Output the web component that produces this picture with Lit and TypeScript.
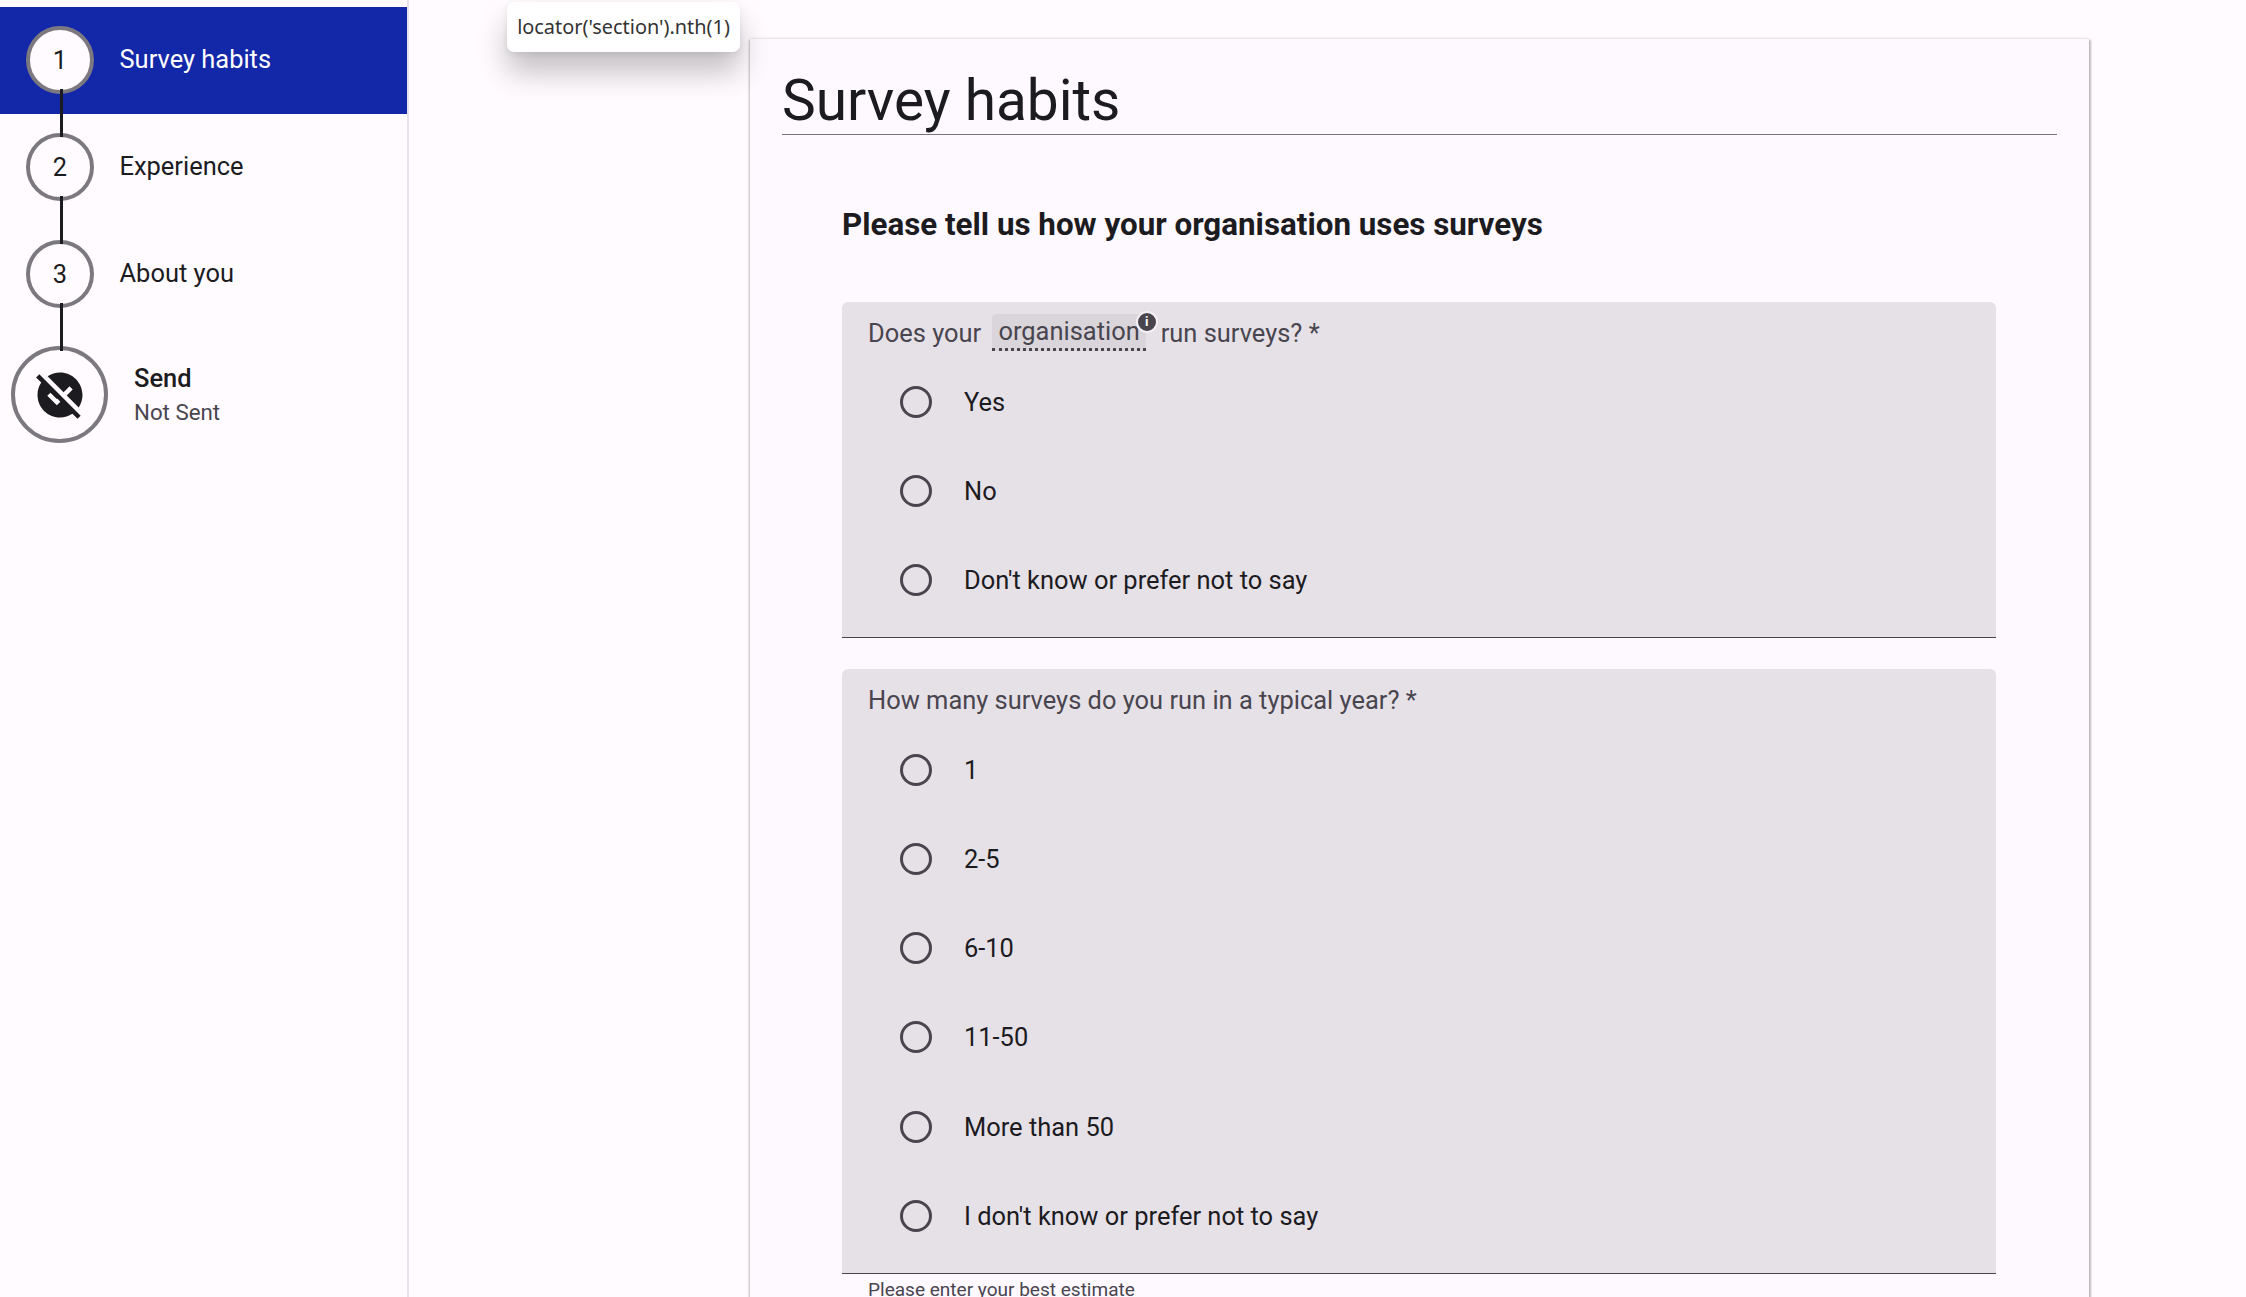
import { LitElement, html, css, svg } from "lit";
import { customElement } from "lit/decorators.js";

const Q2 = ["1", "2-5", "6-10", "11-50", "More than 50", "I don't know or prefer not to say"];
const Q1 = ["Yes", "No", "Don't know or prefer not to say"];

@customElement("app-root")
export class AppRoot extends LitElement {
  static styles = css`
    :host {
      display: block;
      height: 100vh;
      overflow: hidden;
      background: #fffbff;
      color: #1c1b1f;
      font-family: Roboto, sans-serif;
      position: relative;
    }
    .page { display: flex; height: 100%; }
    .side {
      width: 407px;
      flex: none;
      border-right: 2px solid #e7e0ec;
      padding-top: 7px;
      box-sizing: content-box;
    }
    .step {
      height: 107px;
      box-sizing: border-box;
      padding-bottom: 2px;
      display: flex;
      align-items: center;
      position: relative;
      font-size: 25.45px;
    }
    .step.active { background: #1327a9; color: #fff; }
    .label { position: relative; top: -1px; }
    .num {
      width: 68px;
      height: 68px;
      box-sizing: border-box;
      margin-left: 26px;
      margin-right: 25.5px;
      border: 4px solid #7c7880;
      border-radius: 50%;
      background: #fffbff;
      color: #1c1b1f;
      display: flex;
      align-items: center;
      justify-content: center;
      font-size: 25.45px;
      flex: none;
    }
    .line {
      position: absolute;
      left: 60px;
      width: 3px;
      top: 82px;
      height: 48px;
      background: #1c1b1f;
      z-index: 1;
    }
    .step.send { height: 97px; margin-top: 18px; padding-bottom: 0; }
    .big {
      width: 97px;
      height: 97px;
      box-sizing: border-box;
      margin-left: 11px;
      margin-right: 26px;
      border: 4px solid #7c7880;
      border-radius: 50%;
      display: flex;
      align-items: center;
      justify-content: center;
      flex: none;
    }
    .send-name { font-size: 25.45px; font-weight: 500; line-height: 34px; }
    .send-sub { font-size: 22.3px; color: #49454f; line-height: 34px; }
    .main { flex: 1; min-width: 0; }
    .card {
      margin: 39px 0 0 341px;
      width: 1339px;
      box-sizing: border-box;
      padding: 0 32px;
      height: 1400px;
      background: #fdf9fe;
      box-shadow: 0 0 3px rgba(0,0,0,.16), 1.5px 1px 2px rgba(0,0,0,.22), -1px 1px 2px rgba(0,0,0,.18);
    }
    h1 {
      margin: 0;
      padding-top: 14px;
      font-size: 56.8px;
      font-weight: 400;
      line-height: 95px;
      height: 80.5px;
      border-bottom: 1.5px solid #79747e;
      box-sizing: content-box;
    }
    h2 {
      margin: 0;
      padding: 65px 0 0 60px;
      font-size: 31.35px;
      font-weight: 700;
      line-height: 50px;
    }
    .spacer { height: 52px; }
    .box {
      margin: 0 0 31px 60px;
      width: 1154px;
      box-sizing: border-box;
      background: #e6e1e7;
      border-radius: 6px 6px 0 0;
      border-bottom: 1.5px solid #49454f;
      padding: 0 0 12.5px 26px;
    }
    .q {
      height: 56px;
      display: flex;
      align-items: center;
      padding-top: 6px;
      box-sizing: border-box;
      font-size: 25.45px;
      color: #49454f;
      white-space: pre;
    }
    .chip {
      position: relative;
      margin-left: 5px;
      margin-right: 15px;
      padding: 0 6px;
      height: 34px;
      line-height: 34px;
      background: #dad5db;
      border-radius: 5px 5px 0 0;
      border-bottom: 3px dotted #49454f;
      box-sizing: content-box;
    }
    .info {
      position: absolute;
      right: -12px;
      top: -3px;
      width: 18px;
      height: 18px;
      border-radius: 50%;
      background: #49454f;
      border: 2px solid #f4eff4;
      color: #fff;
      font-size: 13px;
      font-weight: 700;
      line-height: 18px;
      text-align: center;
    }
    .opt {
      height: 89.15px;
      display: flex;
      align-items: center;
      font-size: 25.45px;
    }
    .radio {
      width: 32px;
      height: 32px;
      box-sizing: border-box;
      border: 3.4px solid #49454f;
      border-radius: 50%;
      margin-left: 32px;
      margin-right: 32px;
      flex: none;
    }
    .hint {
      margin: -31px 0 0 86px;
      padding-top: 4px;
      font-size: 19.05px;
      line-height: 24px;
      color: #49454f;
    }
    .tip {
      position: absolute;
      left: 507px;
      top: 2px;
      width: 233px;
      height: 50px;
      box-sizing: border-box;
      padding-bottom: 2px;
      background: #fff;
      border-radius: 7px;
      display: flex;
      align-items: center;
      justify-content: center;
      font-family: "Noto Sans", sans-serif;
      font-size: 19.9px;
      color: #333;
      box-shadow: 0 20px 30px rgba(0,0,0,.24), 0 2px 6px rgba(0,0,0,.08);
      z-index: 5;
      white-space: nowrap;
    }
  `;

  private icon() {
    return svg`<svg width="54" height="54" viewBox="0 0 24 24">
      <path fill="#1c1b1f" d="M21.19,21.19L2.81,2.81L1.39,4.22l2.27,2.27C2.61,8.07,2,9.96,2,12c0,5.52,4.48,10,10,10c2.04,0,3.93-0.61,5.51-1.66l2.27,2.27L21.19,21.19z M10.59,16.6l-4.24-4.24l1.41-1.41l2.83,2.83l0.18-0.18l1.41,1.41L10.59,16.6z M13.59,10.76l-7.1-7.1C8.07,2.61,9.96,2,12,2c5.52,0,10,4.48,10,10c0,2.04-0.61,3.93-1.66,5.51l-5.34-5.34l2.65-2.65l-1.41-1.41L13.59,10.76z"/>
    </svg>`;
  }

  private opt(label: string) {
    return html`<div class="opt"><span class="radio"></span><span>${label}</span></div>`;
  }

  render() {
    return html`
      <div class="page">
        <nav class="side">
          <div class="step active"><span class="num">1</span><span class="label">Survey habits</span><span class="line"></span></div>
          <div class="step"><span class="num">2</span><span class="label">Experience</span><span class="line"></span></div>
          <div class="step"><span class="num">3</span><span class="label">About you</span><span class="line"></span></div>
          <div class="step send">
            <span class="big">${this.icon()}</span>
            <div><div class="send-name">Send</div><div class="send-sub">Not Sent</div></div>
          </div>
        </nav>
        <main class="main">
          <section class="card">
            <h1>Survey habits</h1>
            <h2>Please tell us how your organisation uses surveys</h2>
            <div class="spacer"></div>
            <div class="box">
              <div class="q">Does your <span class="chip">organisation<span class="info">i</span></span>run surveys? *</div>
              ${Q1.map((o) => this.opt(o))}
            </div>
            <div class="box">
              <div class="q">How many surveys do you run in a typical year? *</div>
              ${Q2.map((o) => this.opt(o))}
            </div>
            <div class="hint">Please enter your best estimate</div>
          </section>
        </main>
      </div>
      <div class="tip">locator('section').nth(1)</div>
    `;
  }
}
